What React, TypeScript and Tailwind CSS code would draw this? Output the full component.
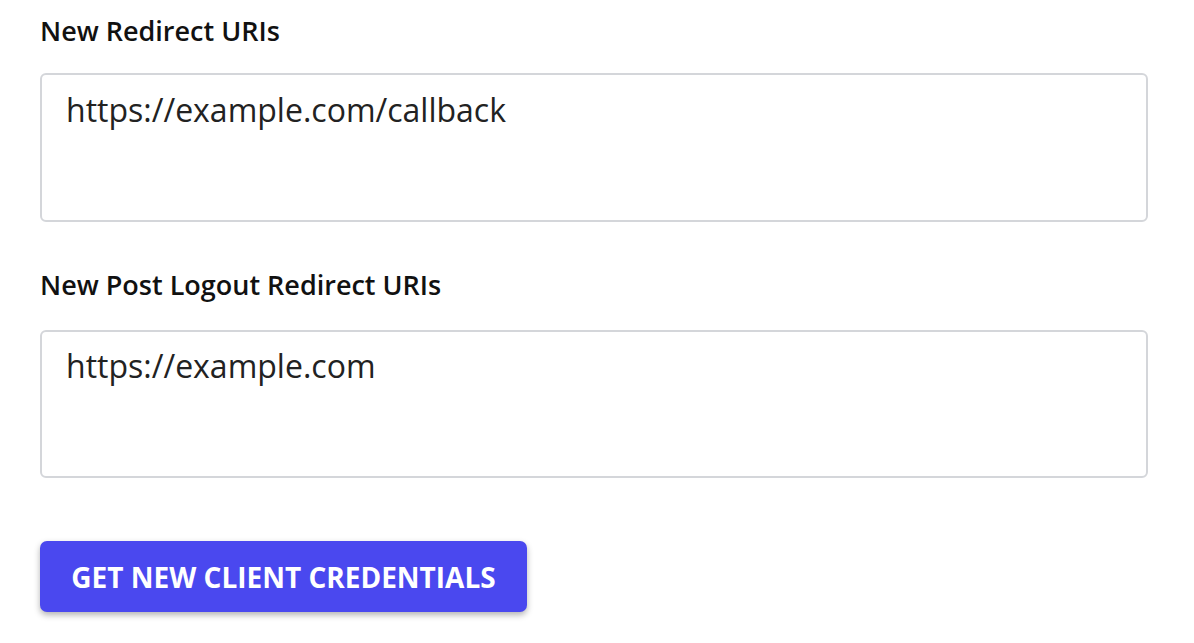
export default function App() {
  const font = { fontFamily: '"Open Sans", sans-serif' };
  return (
    <div className="w-[1194px] h-[643px] bg-white overflow-hidden" style={font}>
      <div className="pl-[40px] pr-[46px] pt-[12px] flex flex-col">
        <label className="text-[27px] font-semibold text-[#111] leading-[38px]">New Redirect URIs</label>
        <textarea
          className="mt-[23px] h-[149px] w-full resize-none rounded-[6px] border-2 border-[#d4d6da] px-[24px] pt-[13px] pb-[12px] text-[32px] leading-[44px] text-[#222] outline-none"
          defaultValue="https://example.com/callback"
        />
        <label className="mt-[44px] text-[27px] font-semibold text-[#111] leading-[38px]">New Post Logout Redirect URIs</label>
        <textarea
          className="mt-[26px] h-[148px] w-full resize-none rounded-[6px] border-2 border-[#d4d6da] px-[24px] pt-[12px] pb-[12px] text-[32px] leading-[44px] text-[#222] outline-none"
          defaultValue="https://example.com"
        />
        <div className="mt-[63px]">
          <button className="h-[71px] w-[487px] rounded-[7px] bg-[#4a48ef] text-white text-[28px] font-bold shadow-[0_3px_6px_rgba(0,0,0,0.3)]">
            GET NEW CLIENT CREDENTIALS
          </button>
        </div>
      </div>
    </div>
  );
}
